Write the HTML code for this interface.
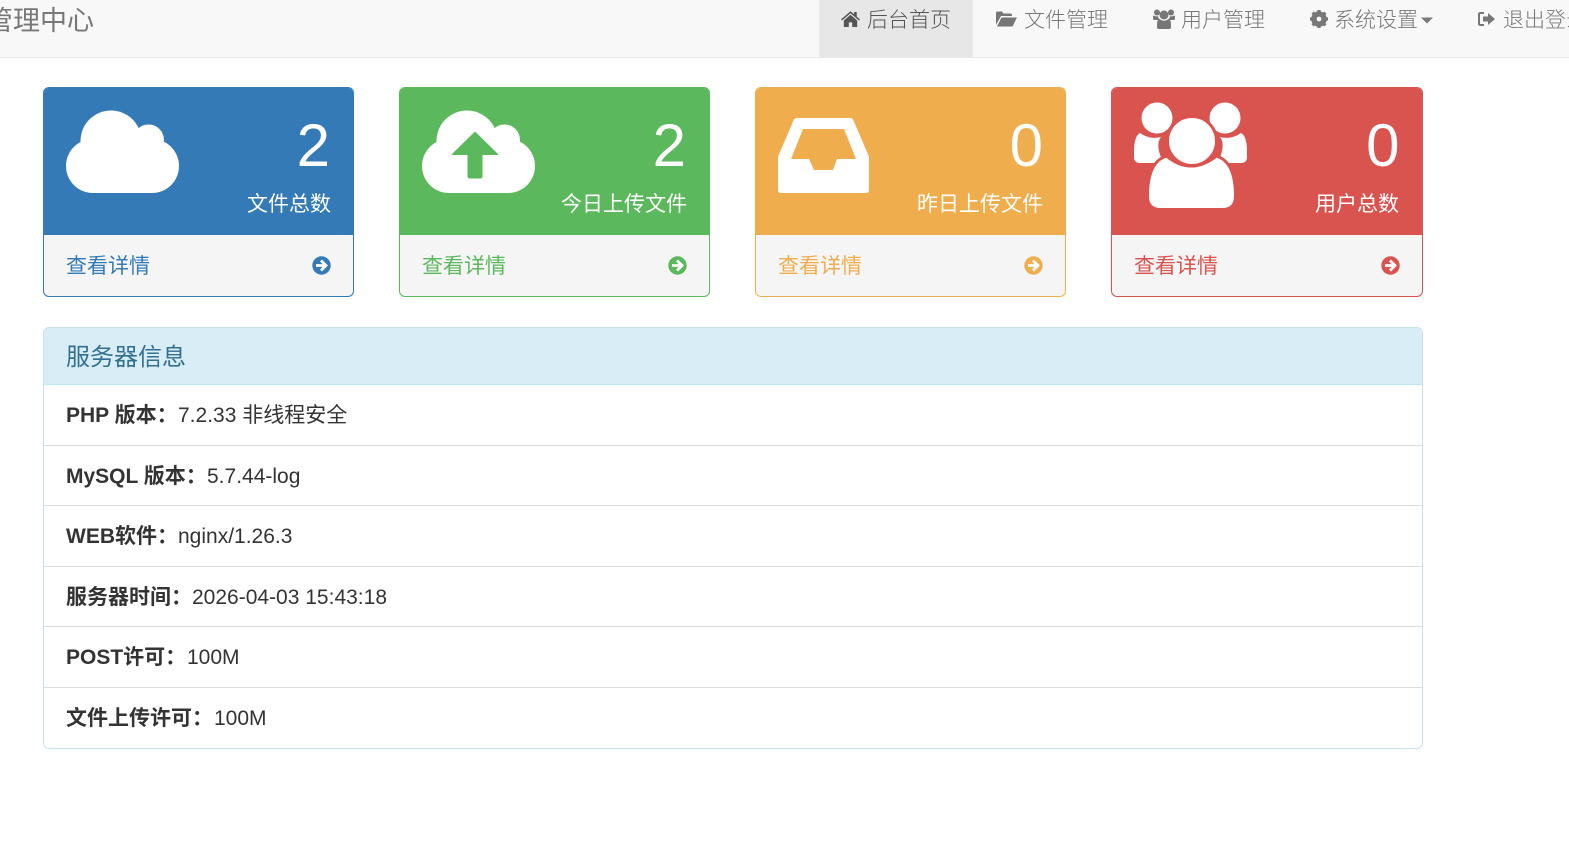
<!DOCTYPE html>
<html><head><meta charset="utf-8"><style>
html,body{margin:0;padding:0;background:#fff;width:1569px;height:856px;overflow:hidden}
body{position:relative;font-family:"Liberation Sans","Noto Sans CJK SC",sans-serif;font-size:21px;color:#333}
.a{position:absolute;white-space:nowrap}
#nav{position:absolute;left:0;top:0;width:1569px;height:57px;background:#f8f8f8;border-bottom:1px solid #e7e7e7}
#act{position:absolute;left:819px;top:0;width:154px;height:57px;background:#e7e7e7}
.n{position:absolute;top:6px;line-height:30px;color:#777;white-space:nowrap;font-size:21px;font-weight:300}
.card{position:absolute;top:87px;width:309px;height:208px;border:1px solid;border-radius:6px;overflow:hidden;background:#f5f5f5}
.head{position:absolute;left:-1px;top:-1px;width:311px;height:148px;}
.num{position:absolute;right:24px;top:29px;font-size:60px;line-height:60px;color:#fff}
.lab{position:absolute;right:23px;top:103px;line-height:30px;color:#fff;white-space:nowrap}
.more{position:absolute;left:22px;top:164px;line-height:30px;white-space:nowrap}
.arr{position:absolute;left:268px;top:168px}
#panel{position:absolute;left:43px;top:327px;width:1378px;height:420px;border:1px solid #c6e3ea;border-radius:6px;overflow:hidden}
#ph{position:absolute;left:0;top:0;width:1378px;height:56px;background:#d9edf7;border-bottom:1px solid #bce8f1;color:#31708f;font-size:24px;line-height:59px;text-indent:22px}
.line{position:absolute;left:0;width:1378px;height:1px;background:#ddd}
.r{position:absolute;line-height:30px;white-space:nowrap}
b{font-weight:700}
</style></head><body>
<div id="nav"></div><div id="act"></div>
<div class="a" style="left:-14px;top:4px;font-size:27px;line-height:34px;color:#777">管理中心</div>

<svg class="a" style="left:840px;top:9px" width="21" height="20" viewBox="0 0 21 20"><path fill="#555" d="M10.500 2.200 1 10.400l1 1.100 8.500-7.200 8.500 7.200 1-1.100-3.300-2.900V3h-2.600v2.300z"/><path fill="#555" d="M10.500 5.800 3.800 11.500V18h5v-4.600h3.400V18h5v-6.500z"/></svg>
<div class="n" style="left:867px;color:#555">后台首页</div>
<svg class="a" style="left:995px;top:9px" width="23" height="20" viewBox="0 0 23 20"><path fill="#777" d="M1 16V4q0-1.500 1.500-1.500h4.500l1.500 2h7q1.500 0 1.500 1.500v1H6L1 16z"/><path fill="#777" d="M6.500 8.500H22l-4.500 9H2z"/></svg>
<div class="n" style="left:1024px">文件管理</div>
<svg class="a" style="left:1152px;top:8px" width="24" height="22" viewBox="0 0 24 22"><g fill="#777"><circle cx="5" cy="4.500" r="3"/><circle cx="19" cy="4.500" r="3"/><circle cx="12" cy="7" r="4.500"/><path d="M1 9q0-1.500 1-1.500 2 1.500 4 .5 .5 3 2 4H2.500Q1 12 1 10.500z"/><path d="M23 9q0-1.500-1-1.500-2 1.500-4 .5-.5 3-2 4h5.500q1.500 0 1.500-1.500z"/><path d="M5 19v-3q0-4 2.500-5 4.500 3.500 9 0 2.500 1 2.500 5v3q0 2-2 2H7q-2 0-2-2z"/></g></svg>
<div class="n" style="left:1181px">用户管理</div>
<svg class="a" style="left:1309px;top:9px" width="20" height="20" viewBox="0 0 20 20"><circle cx="10" cy="10" r="5.600" fill="none" stroke="#777" stroke-width="4.400"/><g stroke="#777" stroke-width="3.200"><path d="M10 1v18M1 10h18M3.600 3.600l12.800 12.800M16.400 3.600 3.600 16.400"/></g><circle cx="10" cy="10" r="2.400" fill="#f8f8f8"/></svg>
<div class="n" style="left:1334px">系统设置</div>
<svg class="a" style="left:1420px;top:17px" width="14" height="8"><path fill="#777" d="M1 .5h12L7 6.500z"/></svg>
<svg class="a" style="left:1477px;top:9px" width="19" height="20" viewBox="0 0 19 20"><path fill="none" stroke="#777" stroke-width="2" d="M7 4H3.500Q2 4 2 5.500v9Q2 16 3.500 16H7"/><path fill="#777" d="M6 7.500h5V4l7 6-7 6v-3.500H6z"/></svg>
<div class="n" style="left:1503px">退出登录</div>

<!-- card 1 -->
<div class="card" style="left:43px;border-color:#337ab7"><div class="head" style="background:#337ab7">
<svg class="a" style="left:0;top:0" width="160" height="148"><g fill="#fff" transform="translate(-43 -87)"><circle cx="111" cy="141" r="30.500"/><circle cx="148.500" cy="140" r="15.500"/><circle cx="93" cy="166" r="27"/><circle cx="152" cy="166" r="27"/><rect x="93" y="140" width="59" height="53"/></g></svg>
<div class="num">2</div><div class="lab">文件总数</div></div>
<div class="more" style="color:#337ab7">查看详情</div>
<svg class="arr" width="19" height="19" viewBox="0 0 19 19"><circle cx="9.500" cy="9.500" r="9.200" fill="#337ab7"/><path fill="none" stroke="#fff" stroke-width="2.800" d="M4 9.500h9.500M9 4.500l5 5-5 5"/></svg>
</div>
<!-- card 2 -->
<div class="card" style="left:399px;border-color:#5cb85c"><div class="head" style="background:#5cb85c">
<svg class="a" style="left:0;top:0" width="160" height="148"><g fill="#fff" transform="translate(-43 -87)"><circle cx="111" cy="141" r="30.500"/><circle cx="148.500" cy="140" r="15.500"/><circle cx="93" cy="166" r="27"/><circle cx="152" cy="166" r="27"/><rect x="93" y="140" width="59" height="53"/></g><path fill="#5cb85c" d="M75.500 45 53 67 Q52.500 68 54 68h14.500v21q0 2.500 2.500 2.500h10q2.500 0 2.500-2.500V68H98q1.500 0 1-1L76.500 45q-.500-.500-1 0z"/></svg>
<div class="num">2</div><div class="lab">今日上传文件</div></div>
<div class="more" style="color:#5cb85c">查看详情</div>
<svg class="arr" width="19" height="19" viewBox="0 0 19 19"><circle cx="9.500" cy="9.500" r="9.200" fill="#5cb85c"/><path fill="none" stroke="#fff" stroke-width="2.800" d="M4 9.500h9.500M9 4.500l5 5-5 5"/></svg>
</div>
<!-- card 3 -->
<div class="card" style="left:755px;border-color:#f0ad4e"><div class="head" style="background:#f0ad4e">
<svg class="a" style="left:0;top:0" width="160" height="148"><path fill="#fff" fill-rule="evenodd" transform="translate(-755 -87)" d="M797 118h53q2.500 0 3.500 2.500l15 35q.5 1.500.5 3V190q0 3-3 3h-85q-3 0-3-3v-31.500q0-1.500.5-3l15-35q1-2.500 3.500-2.500zM803 129l-12 30h18l5 11h19l4-11h19l-12-30z"/></svg>
<div class="num" style="right:23px">0</div><div class="lab">昨日上传文件</div></div>
<div class="more" style="color:#f0ad4e">查看详情</div>
<svg class="arr" width="19" height="19" viewBox="0 0 19 19"><circle cx="9.500" cy="9.500" r="9.200" fill="#f0ad4e"/><path fill="none" stroke="#fff" stroke-width="2.800" d="M4 9.500h9.500M9 4.500l5 5-5 5"/></svg>
</div>
<!-- card 4 -->
<div class="card" style="left:1111px;width:310px;border-color:#d9534f"><div class="head" style="width:312px;background:#d9534f">
<svg class="a" style="left:0;top:0" width="160" height="148"><g transform="translate(-1111 -87)"><g fill="#fff"><circle cx="1157" cy="118" r="15.500"/><circle cx="1225" cy="118" r="15.500"/><path d="M1134 152q0-16 6-19 10 7 21 4-4 5-2 14 1 6 6 12h-25q-6 0-6-6z"/><path d="M1247 152q0-16-6-19-10 7-21 4 4 5 2 14-1 6-6 12h25q6 0 6-6z"/></g><path fill="#fff" stroke="#d9534f" stroke-width="3" d="M1147.500 196q0-34 19-40 24 20 50 0 19 6 19 40 0 13.500-13 13.500h-62q-13 0-13-13.500z"/><circle cx="1192" cy="141" r="24.500" fill="#fff" stroke="#d9534f" stroke-width="3"/></g></svg>
<div class="num" style="right:23.500px">0</div><div class="lab" style="right:24px">用户总数</div></div>
<div class="more" style="left:22px;color:#d9534f">查看详情</div>
<svg class="arr" style="left:268.500px" width="19" height="19" viewBox="0 0 19 19"><circle cx="9.500" cy="9.500" r="9.200" fill="#d9534f"/><path fill="none" stroke="#fff" stroke-width="2.800" d="M4 9.500h9.500M9 4.500l5 5-5 5"/></svg>
</div>

<div id="panel">
<div id="ph">服务器信息</div>
<div class="line" style="top:117px"></div>
<div class="line" style="top:177px"></div>
<div class="line" style="top:238px"></div>
<div class="line" style="top:298px"></div>
<div class="line" style="top:359px"></div>
<div class="r" style="left:22px;top:73px"><b>PHP 版本：</b></div><div class="r" style="left:134px;top:73px">7.2.33 非线程安全</div>
<div class="r" style="left:22px;top:134px"><b>MySQL 版本：</b></div><div class="r" style="left:163px;top:134px">5.7.44-log</div>
<div class="r" style="left:22px;top:194px"><b>WEB软件：</b></div><div class="r" style="left:134px;top:194px">nginx/1.26.3</div>
<div class="r" style="left:22px;top:255px"><b>服务器时间：</b></div><div class="r" style="left:148px;top:255px">2026-04-03 15:43:18</div>
<div class="r" style="left:22px;top:315px"><b>POST许可：</b></div><div class="r" style="left:143px;top:315px">100M</div>
<div class="r" style="left:22px;top:376px"><b>文件上传许可：</b></div><div class="r" style="left:170px;top:376px">100M</div>
</div>
</body></html>
